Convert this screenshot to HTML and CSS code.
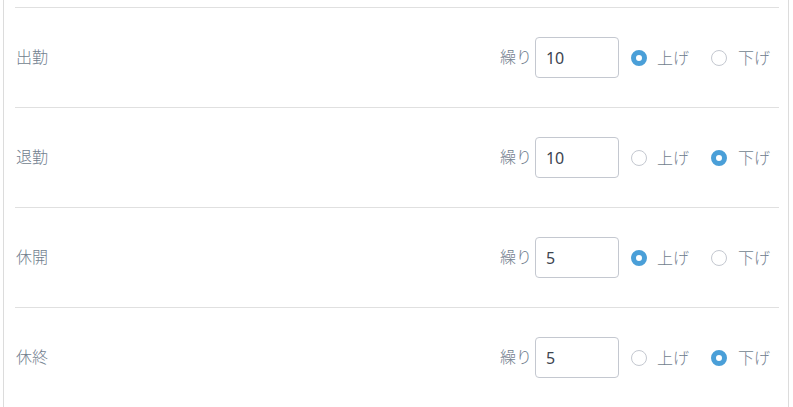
FILE: index.html
```html
<!DOCTYPE html>
<html lang="ja">
<head>
<meta charset="utf-8">
<link rel="stylesheet" href="styles.css">
</head>
<body>
<div class="panel">
  <div class="row">
    <div class="label">出勤</div>
    <div class="controls">
      <span class="unit">繰り</span>
      <input class="num" type="text" value="10">
      <label class="radio"><span class="dot checked"></span><span class="txt">上げ</span></label>
      <label class="radio"><span class="dot"></span><span class="txt">下げ</span></label>
    </div>
  </div>
  <div class="row">
    <div class="label">退勤</div>
    <div class="controls">
      <span class="unit">繰り</span>
      <input class="num" type="text" value="10">
      <label class="radio"><span class="dot"></span><span class="txt">上げ</span></label>
      <label class="radio"><span class="dot checked"></span><span class="txt">下げ</span></label>
    </div>
  </div>
  <div class="row">
    <div class="label">休開</div>
    <div class="controls">
      <span class="unit">繰り</span>
      <input class="num" type="text" value="5">
      <label class="radio"><span class="dot checked"></span><span class="txt">上げ</span></label>
      <label class="radio"><span class="dot"></span><span class="txt">下げ</span></label>
    </div>
  </div>
  <div class="row">
    <div class="label">休終</div>
    <div class="controls">
      <span class="unit">繰り</span>
      <input class="num" type="text" value="5">
      <label class="radio"><span class="dot"></span><span class="txt">上げ</span></label>
      <label class="radio"><span class="dot checked"></span><span class="txt">下げ</span></label>
    </div>
  </div>
</div>
</body>
</html>
```
FILE: styles.css
```css
html, body {
  margin: 0;
  padding: 0;
  background: #fff;
  overflow: hidden;
}
body {
  font-family: "Noto Sans CJK JP", "Noto Sans", sans-serif;
  font-size: 16px;
  font-weight: 300;
  color: #717e8e;
}
.panel {
  margin-left: 3px;
  width: 786px;
  border-left: 1px solid #dcdcdc;
  border-right: 1px solid #dcdcdc;
  padding: 7px 9px 0 11px;
  height: 407px;
  box-sizing: border-box;
}
.row {
  display: flex;
  align-items: center;
  justify-content: space-between;
  height: 100px;
  box-sizing: border-box;
  border-top: 1px solid #e0e0e0;
  padding: 0 9px 0 1px;
}
.label {
  line-height: 24px;
  margin-top: -3px;
}
.controls {
  display: flex;
  align-items: center;
}
.unit {
  margin-right: 3px;
  margin-top: -3px;
}
.txt {
  margin-top: -2px;
}
.num {
  width: 84px;
  height: 41px;
  box-sizing: border-box;
  border: 1px solid #c4c8d0;
  border-radius: 4px;
  padding: 0 10px;
  font-family: "Noto Sans", sans-serif;
  font-size: 16px;
  font-weight: 400;
  color: #3d4450;
  margin: 0 12px 0 0;
  outline: none;
}
.radio {
  display: flex;
  align-items: center;
  gap: 10px;
}
.radio + .radio {
  margin-left: 22px;
  gap: 11px;
}
.dot {
  width: 16px;
  height: 16px;
  box-sizing: border-box;
  border-radius: 50%;
  border: 1px solid #c4c8d0;
  background: #fff;
}
.dot.checked {
  border: 5px solid #4a9fd8;
  background: #fff;
}
```
